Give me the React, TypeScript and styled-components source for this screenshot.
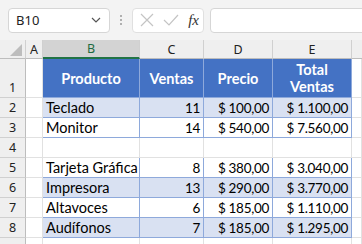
import React from 'react'
import styled, { createGlobalStyle } from 'styled-components'

const GlobalStyle = createGlobalStyle`
  html, body {
    margin: 0;
    padding: 0;
    background: #ffffff;
    overflow: hidden;
  }
`

type Row = { num: string; cells: string[]; band?: boolean; table?: boolean }

const rows: Row[] = [
  { num: '2', cells: ['Teclado', '11', '$ 100,00', '$ 1.100,00'], band: true, table: true },
  { num: '3', cells: ['Monitor', '14', '$ 540,00', '$ 7.560,00'], table: true },
  { num: '4', cells: ['', '', '', ''] },
  { num: '5', cells: ['Tarjeta Gráfica', '8', '$ 380,00', '$ 3.040,00'], table: true },
  { num: '6', cells: ['Impresora', '13', '$ 290,00', '$ 3.770,00'], band: true, table: true },
  { num: '7', cells: ['Altavoces', '6', '$ 185,00', '$ 1.110,00'], table: true },
  { num: '8', cells: ['Audífonos', '7', '$ 185,00', '$ 1.295,00'], band: true, table: true },
  { num: '', cells: ['', '', '', ''] },
]

const cols = ['A', 'B', 'C', 'D', 'E', '']

const App = () => {
  return (
    <>
      <GlobalStyle />
      <Page>
        <FormulaBar>
          <NameBox>
            <span>B10</span>
            <svg width="10" height="6" viewBox="0 0 10 6">
              <path d="M1 1 L5 5 L9 1" fill="none" stroke="#555" strokeWidth="1.2" />
            </svg>
          </NameBox>
          <Dots>
            <i />
            <i />
            <i />
          </Dots>
          <ButtonGroup>
            <svg width="14" height="14" viewBox="0 0 14 14">
              <path d="M1 1 L13 13 M13 1 L1 13" stroke="#c4c4c4" strokeWidth="1.2" />
            </svg>
            <svg width="16" height="14" viewBox="0 0 16 14">
              <path d="M1 7 L6 12 L15 2" fill="none" stroke="#c4c4c4" strokeWidth="1.2" />
            </svg>
            <Fx>fx</Fx>
          </ButtonGroup>
          <FormulaInput />
        </FormulaBar>

        <Sheet>
          <Corner>
            <svg width="12" height="12" viewBox="0 0 12 12">
              <path d="M12 0 L12 12 L0 12 Z" fill="#bdbdbd" />
            </svg>
          </Corner>
          {cols.map((c, i) => (
            <ColHeader key={i} $selected={c === 'B'} $last={i === cols.length - 1}>
              {c}
            </ColHeader>
          ))}

          <RowHeader>1</RowHeader>
          <Cell />
          <HeadCell>Producto</HeadCell>
          <HeadCell>Ventas</HeadCell>
          <HeadCell>Precio</HeadCell>
          <HeadCell>
            Total
            <br />
            Ventas
          </HeadCell>
          <Cell />

          {rows.map((r, ri) => (
            <React.Fragment key={ri}>
              <RowHeader>{r.num}</RowHeader>
              <Cell />
              {r.cells.map((v, i) => (
                <Cell key={i} $table={r.table} $band={r.band} $num={i > 0}>
                  {v}
                </Cell>
              ))}
              <Cell />
            </React.Fragment>
          ))}
        </Sheet>
      </Page>
    </>
  )
}

const Page = styled.div`
  width: 362px;
  height: 244px;
  background: #f3f3f3;
  overflow: hidden;
  font-family: 'Lato', 'Liberation Sans', sans-serif;
`

const FormulaBar = styled.div`
  display: flex;
  align-items: center;
  height: 40px;
  padding: 0 0 0 8px;
  box-sizing: border-box;
`

const NameBox = styled.div`
  width: 102px;
  height: 25px;
  box-sizing: border-box;
  background: #fff;
  border: 1px solid #d6d6d6;
  border-radius: 4px;
  display: flex;
  align-items: center;
  justify-content: space-between;
  padding: 0 8px 0 7px;
  font-family: 'Noto Sans', 'Liberation Sans', sans-serif;
  font-size: 13px;
  color: #222;
`

const Dots = styled.div`
  width: 22px;
  display: flex;
  flex-direction: column;
  align-items: center;
  gap: 2px;

  i {
    width: 2px;
    height: 2px;
    background: #9a9a9a;
    border-radius: 1px;
  }
`

const ButtonGroup = styled.div`
  width: 72px;
  height: 25px;
  box-sizing: border-box;
  background: #fff;
  border: 1px solid #e0e0e0;
  border-radius: 4px;
  display: flex;
  align-items: center;
  justify-content: space-between;
  padding: 0 4px 0 7px;
`

const Fx = styled.span`
  font-family: 'Liberation Serif', serif;
  font-style: italic;
  font-size: 15px;
  color: #333;
`

const FormulaInput = styled.div`
  flex: 1;
  height: 25px;
  margin-left: 6px;
  margin-right: -10px;
  box-sizing: border-box;
  background: #fff;
  border: 1px solid #d6d6d6;
  border-radius: 4px;
`

const Sheet = styled.div`
  display: grid;
  grid-template-columns: 26px 17px 97px 64px 69px 79px 1fr;
  grid-template-rows: 19px 39px repeat(8, 20px);
  background: #fff;
`

const Corner = styled.div`
  background: #efefef;
  border-right: 1px solid #d0d0d0;
  border-bottom: 1px solid #bdbdbd;
  box-sizing: border-box;
  display: flex;
  align-items: flex-end;
  justify-content: flex-end;
  padding: 0 3px 2px 0;
`

const ColHeader = styled.div<{ $selected?: boolean; $last?: boolean }>`
  box-sizing: border-box;
  background: ${p => (p.$selected ? '#d3d3d3' : '#efefef')};
  border-right: ${p => (p.$last ? 'none' : '1px solid #d0d0d0')};
  border-bottom: ${p => (p.$selected ? '2px solid #217346' : '1px solid #bdbdbd')};
  color: ${p => (p.$selected ? '#1e6b41' : '#222')};
  font-family: 'Noto Sans', 'Liberation Sans', sans-serif;
  font-size: 12.5px;
  display: flex;
  align-items: center;
  justify-content: center;
`

const RowHeader = styled.div`
  box-sizing: border-box;
  background: #efefef;
  border-right: 1px solid #bdbdbd;
  border-bottom: 1px solid #d0d0d0;
  color: #222;
  font-family: 'Noto Sans', 'Liberation Sans', sans-serif;
  font-size: 12.5px;
  display: flex;
  align-items: flex-end;
  justify-content: center;
  padding-bottom: 1px;
`

const Cell = styled.div<{ $table?: boolean; $band?: boolean; $num?: boolean }>`
  box-sizing: border-box;
  background: ${p => (p.$band ? '#d9e1f2' : '#fff')};
  border-right: 1px solid ${p => (p.$table ? '#8ea9db' : '#e1e1e1')};
  border-bottom: 1px solid ${p => (p.$table ? '#8ea9db' : '#e1e1e1')};
  font-size: ${p => (p.$num ? '13.5px' : '14.5px')};
  letter-spacing: ${p => (p.$num ? '-0.3px' : '0')};
  color: #000;
  display: flex;
  align-items: flex-end;
  justify-content: ${p => (p.$num ? 'flex-end' : 'flex-start')};
  padding: 0 3px 0 3px;
  white-space: nowrap;
  line-height: 18px;
`

const HeadCell = styled.div`
  box-sizing: border-box;
  background: #4472c4;
  border-right: 1px solid #8ea9db;
  border-bottom: 1px solid #8ea9db;
  color: #fff;
  font-weight: 700;
  font-size: 14.5px;
  line-height: 17px;
  text-align: center;
  display: flex;
  align-items: center;
  justify-content: center;
`

export default App
